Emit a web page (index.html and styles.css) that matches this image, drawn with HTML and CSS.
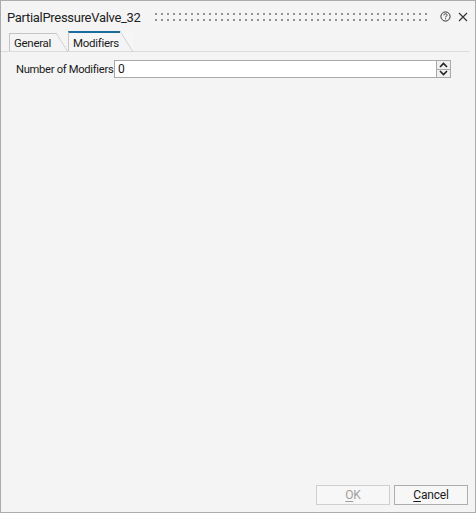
FILE: index.html
```html
<!DOCTYPE html>
<html>
<head>
<meta charset="utf-8">
<link rel="stylesheet" href="styles.css">
</head>
<body>
<div class="window">
  <div class="titlebar">
    <span class="title">PartialPressureValve_32</span>
    <span class="grip"></span>
    <svg class="help" width="11" height="11" viewBox="0 0 11 11">
      <circle cx="5.5" cy="5.5" r="4.6" fill="none" stroke="#333" stroke-width="1"/>
      <path d="M3.9 4.3 C3.9 3.2 4.6 2.8 5.5 2.8 C6.4 2.8 7.1 3.3 7.1 4.1 C7.1 5 5.6 5.2 5.6 6.4" fill="none" stroke="#333" stroke-width="1"/>
      <rect x="5.1" y="7.4" width="1" height="1" fill="#333"/>
    </svg>
    <svg class="close" width="10" height="10" viewBox="0 0 10 10">
      <path d="M1 1 L9 9 M9 1 L1 9" stroke="#333" stroke-width="1.1"/>
    </svg>
  </div>
  <div class="tabs">
    <div class="tab">General</div>
    <div class="tab active">Modifiers</div>
  </div>
  <div class="content">
    <div class="row">
      <label class="label">Number of Modifiers</label>
      <div class="input">0</div>
      <div class="spin">
        <div class="spin-btn">
          <svg width="9" height="6" viewBox="0 0 9 6"><path d="M1 5 L4.5 1.5 L8 5" fill="none" stroke="#222" stroke-width="1.6"/></svg>
        </div>
        <div class="spin-btn">
          <svg width="9" height="6" viewBox="0 0 9 6"><path d="M1 1 L4.5 4.5 L8 1" fill="none" stroke="#222" stroke-width="1.6"/></svg>
        </div>
      </div>
    </div>
  </div>
  <div class="footer">
    <button class="btn disabled"><u>O</u>K</button>
    <button class="btn"><u>C</u>ancel</button>
  </div>
</div>
</body>
</html>
```
FILE: styles.css
```css
* { box-sizing: border-box; }
html, body { margin: 0; padding: 0; }
body {
  font-family: "Segoe UI", Roboto, "Liberation Sans", sans-serif;
  font-size: 11.5px;
  letter-spacing: -0.3px;
  color: #1a1a1a;
  background: #f4f4f4;
}
.window {
  width: 476px;
  height: 513px;
  border: 1px solid #acacac;
  background: #f4f4f4;
  display: flex;
  flex-direction: column;
}
.titlebar {
  height: 30px;
  display: flex;
  align-items: center;
  padding-left: 6px;
  padding-top: 3px;
}
.title {
  font-size: 13px;
  letter-spacing: -0.3px;
  color: #222;
  width: 148px;
  white-space: nowrap;
}
.grip {
  width: 274px;
  height: 8px;
  margin-top: -2px;
  background-image: linear-gradient(to right, #939393 2px, transparent 2px);
  background-size: 6px 6px;
  -webkit-mask: linear-gradient(to bottom, #000 2px, transparent 2px) 0 0 / 6px 6px repeat;
          mask: linear-gradient(to bottom, #000 2px, transparent 2px) 0 0 / 6px 6px repeat;
}
.help { margin-left: 11px; margin-top: -2px; }
.close { margin-left: 7px; margin-top: -2px; }
.tabs {
  display: flex;
  align-items: flex-end;
  height: 21px;
  padding-left: 8px;
  margin-right: 5px;
  border-bottom: 1px solid #dcdcdc;
}
.tab {
  position: relative;
  height: 18px;
  padding: 1px 5px 0 4px;
  border-left: 1px solid #c4c4c4;
  border-top: 1px solid #c4c4c4;
  margin-right: 12px;
  line-height: 16px;
  color: #1a1a1a;
}
.tab::after {
  content: "";
  position: absolute;
  top: -1px;
  right: -12px;
  width: 12px;
  height: 19px;
  background: linear-gradient(to top right, transparent calc(50% - 0.6px), #c4c4c4 50%, transparent calc(50% + 0.6px));
}
.tab.active {
  height: 20px;
  padding: 2px 1px 0 4px;
  border-top: 2px solid #1b6c9c;
  background: #f6f6f6;
  z-index: 1;
}
.tab.active::after {
  top: -2px;
  height: 21px;
  right: -13px;
  width: 13px;
  background: linear-gradient(to top right, transparent calc(50% - 0.6px), #c4c4c4 50%, transparent calc(50% + 0.6px)), linear-gradient(to top right, transparent 50%, #f6f6f6 50%);
}
.content {
  flex: 1;
  padding: 8px 0 0 15px;
}
.row {
  display: flex;
  align-items: center;
  height: 18px;
}
.label {
  width: 98px;
  padding-right: 4px;
  text-align: right;
  white-space: nowrap;
  font-size: 11.2px;
  letter-spacing: -0.3px;
}
.input {
  width: 323px;
  height: 18px;
  border: 1px solid #a9a9a9;
  background: #fff;
  padding-left: 3px;
  line-height: 16px;
  font-size: 12px;
}
.spin {
  width: 14px;
  height: 18px;
  border: 1px solid #a9a9a9;
  border-left: none;
  display: flex;
  flex-direction: column;
  background: #f0f0f0;
}
.spin-btn {
  flex: 1;
  display: flex;
  align-items: center;
  justify-content: center;
}
.spin-btn + .spin-btn { border-top: 1px solid #a9a9a9; }
.footer {
  display: flex;
  justify-content: flex-end;
  gap: 4px;
  padding: 0 7px 7px 0;
}
.btn {
  width: 74px;
  height: 20px;
  font-family: inherit;
  font-size: 12px;
  letter-spacing: -0.2px;
  color: #1a1a1a;
  background: #f7f7f7;
  border: 1px solid #adadad;
  padding: 0;
  line-height: 17px;
}
.btn u { text-decoration-thickness: 1px; text-underline-offset: 2px; }
.btn.disabled {
  color: #a0a0a0;
  border-color: #cfcfcf;
}
```
